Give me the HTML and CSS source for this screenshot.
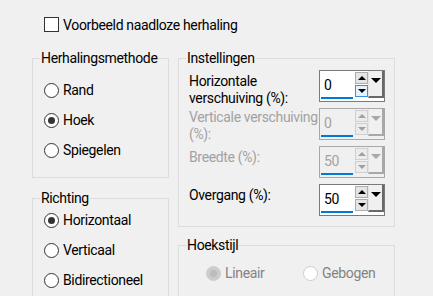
FILE: index.html
```html
<!DOCTYPE html>
<html>
<head>
  <meta charset="UTF-8">
  <link rel="stylesheet" href="styles.css">
</head>
<body>
  <div id="dialog">
    <div class="check-row">
      <span class="checkbox"></span>
      <span>Voorbeeld naadloze herhaling</span>
    </div>

    <div id="columns">
      <div class="col-left">
        <div class="group group-method">
          <div class="group-title">Herhalingsmethode</div>
          <div class="radio-list">
            <div class="radio-row"><span class="radio"></span>Rand</div>
            <div class="radio-row"><span class="radio checked"></span>Hoek</div>
            <div class="radio-row"><span class="radio"></span>Spiegelen</div>
          </div>
        </div>

        <div class="group group-dir">
          <div class="group-title">Richting</div>
          <div class="radio-list">
            <div class="radio-row"><span class="radio checked"></span>Horizontaal</div>
            <div class="radio-row"><span class="radio"></span>Verticaal</div>
            <div class="radio-row"><span class="radio"></span>Bidirectioneel</div>
          </div>
        </div>
      </div>

      <div class="col-right">
        <div class="group group-settings">
          <div class="group-title">Instellingen</div>
          <div class="settings">
            <div class="setting-label">Horizontale<br>verschuiving (%):</div>
            <div class="spin">
              <div class="spin-field"><span class="spin-value">0</span><span class="spin-bar"></span></div>
              <div class="spin-btns">
                <span class="spin-btn"><i class="tri-up"></i></span>
                <span class="spin-btn hot"><i class="tri-down"></i></span>
              </div>
              <div class="spin-drop"><i class="tri-big"></i></div>
            </div>

            <div class="setting-label disabled tight">Verticale verschuiving<br>(%):</div>
            <div class="spin disabled">
              <div class="spin-field"><span class="spin-value">0</span><span class="spin-bar"></span></div>
              <div class="spin-btns">
                <span class="spin-btn"><i class="tri-up"></i></span>
                <span class="spin-btn"><i class="tri-down"></i></span>
              </div>
              <div class="spin-drop"><i class="tri-big"></i></div>
            </div>

            <div class="setting-label disabled">Breedte (%):</div>
            <div class="spin disabled">
              <div class="spin-field"><span class="spin-value">50</span><span class="spin-bar"></span></div>
              <div class="spin-btns">
                <span class="spin-btn"><i class="tri-up"></i></span>
                <span class="spin-btn"><i class="tri-down"></i></span>
              </div>
              <div class="spin-drop"><i class="tri-big"></i></div>
            </div>

            <div class="setting-label">Overgang (%):</div>
            <div class="spin">
              <div class="spin-field"><span class="spin-value">50</span><span class="spin-bar"></span></div>
              <div class="spin-btns">
                <span class="spin-btn"><i class="tri-up"></i></span>
                <span class="spin-btn"><i class="tri-down"></i></span>
              </div>
              <div class="spin-drop"><i class="tri-big"></i></div>
            </div>
          </div>
        </div>

        <div class="group group-corner">
          <div class="group-title">Hoekstijl</div>
          <div class="corner-row">
            <div class="radio-row disabled"><span class="radio checked"></span>Lineair</div>
            <div class="radio-row disabled"><span class="radio"></span>Gebogen</div>
          </div>
        </div>
      </div>
    </div>
  </div>
</body>
</html>
```

FILE: styles.css
```css
* { box-sizing: border-box; margin: 0; padding: 0; }
html, body {
  width: 433px;
  height: 296px;
  overflow: hidden;
}
body {
  background: #f0f0f0;
  color: #000;
  font-family: Roboto, "Noto Sans", sans-serif;
  font-size: 14px;
  letter-spacing: -0.35px;
  line-height: 17px;
}

/* top checkbox */
.check-row {
  display: flex;
  align-items: center;
  gap: 4px;
  height: 17px;
  margin: 16px 0 0 44px;
  white-space: nowrap;
}
.check-row span + span { padding-top: 2px; }
.checkbox {
  width: 15px;
  height: 15px;
  border: 1px solid #333;
  background: #fff;
}

#columns {
  display: flex;
  gap: 9px;
  margin: 25px 0 0 32px;
}
.col-left { width: 137px; }
.col-right { width: 217px; }

/* group boxes */
.group {
  border: 1px solid #dcdcdc;
}
.group-title {
  width: fit-content;
  margin: -9px 0 0 7px;
  padding: 0 1px;
  background: #f0f0f0;
  white-space: nowrap;
}
.group-method { height: 120px; }
.group-dir { height: 110px; margin-top: 20px; }
.group-settings { height: 169px; }
.group-corner { height: 60px; margin-top: 18px; }

/* radios */
.radio-list { padding-left: 11px; margin-top: 8px; }
.group-dir .radio-list { margin-top: -2px; }
.radio-row {
  display: flex;
  align-items: center;
  gap: 4px;
  height: 30px;
  white-space: nowrap;
}
.radio {
  width: 15px;
  height: 15px;
  border: 1px solid #333;
  border-radius: 50%;
  background: #fff;
  display: flex;
  align-items: center;
  justify-content: center;
}
.radio.checked::after {
  content: "";
  width: 7px;
  height: 7px;
  border-radius: 50%;
  background: #333;
}
.radio-row.disabled { color: #838383; }
.radio-row.disabled .radio { border-color: #cccccc; }
.radio-row.disabled .radio.checked { background: #cccccc; }
.radio-row.disabled .radio.checked::after { background: #bcbcbc; }

.corner-row {
  display: grid;
  grid-template-columns: 97px auto;
  padding-left: 27px;
  margin-top: 4px;
}

/* settings grid */
.settings {
  display: grid;
  grid-template-columns: 130px 66px;
  grid-auto-rows: 32px;
  row-gap: 6px;
  padding-left: 10px;
  margin-top: 3px;
}
.setting-label { padding-top: 3px; white-space: nowrap; }
.setting-label.tight { padding-top: 1px; }
.setting-label.disabled { color: #a2a2a2; }

/* spin box */
.spin {
  display: flex;
  border: 1px solid #7a7a7a;
  background: #fff;
}
.spin-field {
  width: 34px;
  display: flex;
  flex-direction: column;
  justify-content: flex-end;
}
.spin-value {
  padding-left: 4px;
  margin-bottom: 3px;
}
.spin-bar {
  height: 2px;
  width: 32px;
  margin: 0 0 2px 1px;
  background: #0078d7;
}
.spin-btns {
  display: flex;
  flex-direction: column;
  gap: 1px;
  padding: 1px 0 0 1px;
  width: 14px;
}
.spin-btn {
  width: 13px;
  height: 12px;
  border: 1px solid #adadad;
  background: #e5e5e5;
  display: flex;
  align-items: center;
  justify-content: center;
}
.spin-btn.hot {
  border-color: #3c8ee0;
  background: #e5f1fb;
}
.tri-up, .tri-down {
  width: 0;
  height: 0;
  border-left: 4px solid transparent;
  border-right: 4px solid transparent;
}
.tri-up { border-bottom: 4px solid #000; }
.tri-down { border-top: 4px solid #000; }
.spin-drop {
  width: 16px;
  height: 27px;
  border-left: 1px solid #e3e3e3;
  border-right: 2px solid #696969;
  border-bottom: 2px solid #696969;
  background: #f0f0f0;
  display: flex;
  justify-content: center;
  padding-top: 7px;
}
.tri-big {
  width: 0;
  height: 0;
  border-left: 5px solid transparent;
  border-right: 5px solid transparent;
  border-top: 5px solid #000;
}

.spin.disabled { background: #f0f0f0; border-color: #a8a8a8; }
.spin.disabled .spin-value { color: #a2a2a2; }
.spin.disabled .spin-btn { border-color: #cfcfcf; background: #ececec; }
.spin.disabled .tri-up { border-bottom-color: #a0a0a0; }
.spin.disabled .tri-down { border-top-color: #a0a0a0; }
.spin.disabled .tri-big { border-top-color: #a8a8a8; }
.spin.disabled .spin-drop { border-right-color: #a8a8a8; border-bottom-color: #a8a8a8; }
```
